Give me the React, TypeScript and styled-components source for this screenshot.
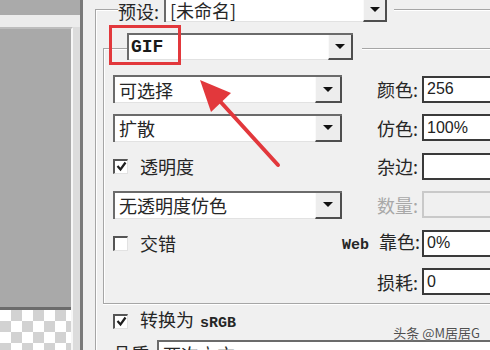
import styled, { createGlobalStyle } from "styled-components";

const GlobalStyle = createGlobalStyle`
  html, body {
    margin: 0;
    padding: 0;
    background: #f0f0f0;
  }
`;

const Screen = styled.div`
  position: relative;
  width: 490px;
  height: 350px;
  overflow: hidden;
  display: flex;
  background: #f0f0f0;
  color: #262626;
  font-family: "Noto Sans CJK SC", "Noto Sans", sans-serif;
`;

/* ---------- left preview pane ---------- */

const LeftPane = styled.div`
  width: 80px;
  flex: none;
  display: flex;
  flex-direction: column;
  background: #dcdcdc;
`;

const TopBand = styled.div`
  height: 15px;
  background: #aaaaaa;
`;

const LightBand = styled.div`
  height: 12px;
  background: #ececec;
`;

const PreviewFrame = styled.div`
  width: 71px;
  flex: 1;
  display: flex;
  flex-direction: column;
  border-top: 2px solid #bdbdbd;
  border-right: 2px solid #f6f6f6;
`;

const GrayArea = styled.div`
  height: 278px;
  background: #a9a9a9;
  border-bottom: 3px solid #6c6c6c;
`;

const Checker = styled.div`
  flex: 1;
  background: repeating-conic-gradient(#d2d2d2 0 25%, #ffffff 0 50%) 0 0 / 22px 22px;
`;

const Divider = styled.div`
  width: 3px;
  flex: none;
  background: #7a7a7a;
`;

/* ---------- settings panel ---------- */

const Panel = styled.div`
  flex: 1;
  padding-left: 12px;
`;

const OuterGroup = styled.div`
  margin-top: 9px;
  border-top: 1px solid #a6a6a6;
  border-left: 1px solid #a6a6a6;
  box-shadow: inset 1px 1px 0 #ffffff;
  height: 400px;
`;

const PresetRow = styled.div`
  margin-top: -14px;
  height: 26px;
  padding-left: 22px;
  display: flex;
`;

const Legend = styled.div`
  background: #f0f0f0;
  padding-right: 5px;
  font-size: 18px;
  line-height: 22px;
  margin-top: 4px;
`;

const Gap = styled.div<{ $w: number }>`
  width: ${(p) => p.$w}px;
  background: #f0f0f0;
`;

const SelectBox = styled.div<{ $w: number }>`
  display: flex;
  width: ${(p) => p.$w}px;
  height: 100%;
  box-sizing: border-box;
  background: #ffffff;
  border-top: 2px solid #6b6b6b;
  border-left: 2px solid #6b6b6b;
  flex: none;
`;

const SelectText = styled.div<{ $mono?: boolean }>`
  flex: 1;
  padding-left: ${(p) => (p.$mono ? 2 : 4)}px;
  display: flex;
  align-items: center;
  white-space: nowrap;
  overflow: hidden;
  font-size: 18px;
  line-height: 1;
  border-bottom: 1px solid #e2e2e2;
  font-family: ${(p) =>
    p.$mono ? `"Liberation Mono", monospace` : `"Noto Sans CJK SC", sans-serif`};
  font-weight: ${(p) => (p.$mono ? 700 : 400)};
  color: ${(p) => (p.$mono ? "#1a1a1a" : "#262626")};
`;

const SelectButton = styled.div<{ $w: number }>`
  width: ${(p) => p.$w}px;
  flex: none;
  box-sizing: border-box;
  background: #ededed;
  border-left: 1px solid #fafafa;
  border-right: 2px solid #4e4e4e;
  border-bottom: 2px solid #4e4e4e;
  display: flex;
  align-items: center;
  justify-content: center;

  &::after {
    content: "";
    border-left: 5px solid transparent;
    border-right: 5px solid transparent;
    border-top: 5px solid #111;
  }
`;

const InnerGroup = styled.div`
  margin-top: 26px;
  margin-left: 7px;
  border-top: 1px solid #a6a6a6;
  border-left: 1px solid #a6a6a6;
  border-bottom: 1px solid #a6a6a6;
  box-shadow: inset 1px 1px 0 #ffffff, 0 1px 0 #ffffff;
  padding-bottom: 7px;
`;

const FormatRow = styled.div`
  margin-top: -16px;
  height: 27px;
  padding-left: 23px;
  display: flex;
`;

const OptionGrid = styled.div`
  margin-top: 15px;
  padding-left: 9px;
  display: grid;
  grid-template-columns: 229px 76px 1fr;
  grid-auto-rows: 28px;
  row-gap: 10.5px;
  align-items: center;
`;

const CheckRow = styled.div`
  display: flex;
  align-items: center;
  gap: 12px;
  font-size: 18px;
  line-height: 20px;
`;

const Box = styled.span`
  width: 15px;
  height: 15px;
  box-sizing: border-box;
  background: #ffffff;
  border-top: 2px solid #555;
  border-left: 2px solid #555;
  border-right: 1px solid #e2e2e2;
  border-bottom: 1px solid #e2e2e2;
  display: flex;
  align-items: center;
  justify-content: center;
`;

const FieldLabel = styled.div<{ $disabled?: boolean }>`
  text-align: right;
  white-space: nowrap;
  font-size: 18px;
  line-height: 22px;
  color: ${(p) => (p.$disabled ? "#a8a8a8" : "#262626")};
`;

const WebTag = styled.span`
  font-family: "Liberation Mono", monospace;
  font-weight: 700;
  font-size: 15px;
  margin-right: 10px;
`;

const Input = styled.div<{ $disabled?: boolean }>`
  margin-left: 4px;
  width: 100px;
  height: 27px;
  box-sizing: border-box;
  border: 2px solid ${(p) => (p.$disabled ? "#c9c9c9" : "#3a3a3a")};
  border-right: none;
  background: ${(p) => (p.$disabled ? "#f0f0f0" : "#ffffff")};
  padding-left: 3px;
  display: flex;
  align-items: center;
  font-family: "Liberation Sans", sans-serif;
  font-size: 16px;
  color: #222;
`;

const SrgbRow = styled(CheckRow)`
  margin-top: 9px;
  padding-left: 17px;
  height: 17px;
`;

const Mono = styled.span`
  font-family: "Liberation Mono", monospace;
  font-weight: 700;
  font-size: 15px;
  margin-left: 6px;
`;

const QualityRow = styled.div`
  margin-top: 10px;
  padding-left: 17px;
  height: 28px;
  display: flex;
  align-items: flex-start;
`;

const QualityLabel = styled.div`
  width: 44px;
  font-size: 18px;
  line-height: 22px;
  margin-top: 2px;
`;

/* ---------- overlays ---------- */

const Highlight = styled.div`
  position: absolute;
  left: 109px;
  top: 25px;
  width: 72px;
  height: 40px;
  box-sizing: border-box;
  border: 3px solid #e2383c;
`;

const ArrowLayer = styled.svg`
  position: absolute;
  left: 0;
  top: 0;
  pointer-events: none;
`;

const Watermark = styled.div`
  position: absolute;
  right: 10px;
  bottom: 10px;
  font-size: 13px;
  line-height: 14px;
  color: #505050;
  text-shadow: 0 0 1px #fff;
  white-space: nowrap;
`;

const Tick = () => (
  <svg width="11" height="11" viewBox="0 0 11 11">
    <path d="M1.5 5 L4.5 8.5 L9.5 1.5" fill="none" stroke="#1e1e1e" strokeWidth="2.2" />
  </svg>
);

const Select = ({ w, btn, text, mono }: { w: number; btn: number; text: string; mono?: boolean }) => (
  <SelectBox $w={w}>
    <SelectText $mono={mono}>{text}</SelectText>
    <SelectButton $w={btn} />
  </SelectBox>
);

export default function App() {
  return (
    <Screen>
      <GlobalStyle />
      <LeftPane>
        <TopBand />
        <LightBand />
        <PreviewFrame>
          <GrayArea />
          <Checker />
        </PreviewFrame>
      </LeftPane>
      <Divider />
      <Panel>
        <OuterGroup>
          <PresetRow>
            <Legend>预设:</Legend>
            <Select w={223} btn={24} text="[未命名]" />
            <Gap $w={7} />
          </PresetRow>
          <InnerGroup>
            <FormatRow>
              <Select w={226} btn={25} text="GIF" mono />
              <Gap $w={9} />
            </FormatRow>
            <OptionGrid>
              <Select w={229} btn={27} text="可选择" />
              <FieldLabel>颜色:</FieldLabel>
              <Input>256</Input>

              <Select w={229} btn={27} text="扩散" />
              <FieldLabel>仿色:</FieldLabel>
              <Input>100%</Input>

              <CheckRow>
                <Box>
                  <Tick />
                </Box>
                透明度
              </CheckRow>
              <FieldLabel>杂边:</FieldLabel>
              <Input />

              <Select w={229} btn={27} text="无透明度仿色" />
              <FieldLabel $disabled>数量:</FieldLabel>
              <Input $disabled />

              <CheckRow>
                <Box />
                交错
              </CheckRow>
              <FieldLabel>
                <WebTag>Web</WebTag>靠色:
              </FieldLabel>
              <Input>0%</Input>

              <div />
              <FieldLabel>损耗:</FieldLabel>
              <Input>0</Input>
            </OptionGrid>
          </InnerGroup>
          <SrgbRow>
            <Box>
              <Tick />
            </Box>
            <span>
              转换为<Mono>sRGB</Mono>
            </span>
          </SrgbRow>
          <QualityRow>
            <QualityLabel>品质:</QualityLabel>
            <Select w={400} btn={27} text="两次立方" />
          </QualityRow>
        </OuterGroup>
      </Panel>

      <Highlight />
      <ArrowLayer width="490" height="350" viewBox="0 0 490 350">
        <line x1="278" y1="165" x2="218" y2="99" stroke="#e2383c" strokeWidth="4" strokeLinecap="round" />
        <polygon points="200,80 231,93 211,112" fill="#e2383c" />
      </ArrowLayer>
      <Watermark>头条 @M居居G</Watermark>
    </Screen>
  );
}
